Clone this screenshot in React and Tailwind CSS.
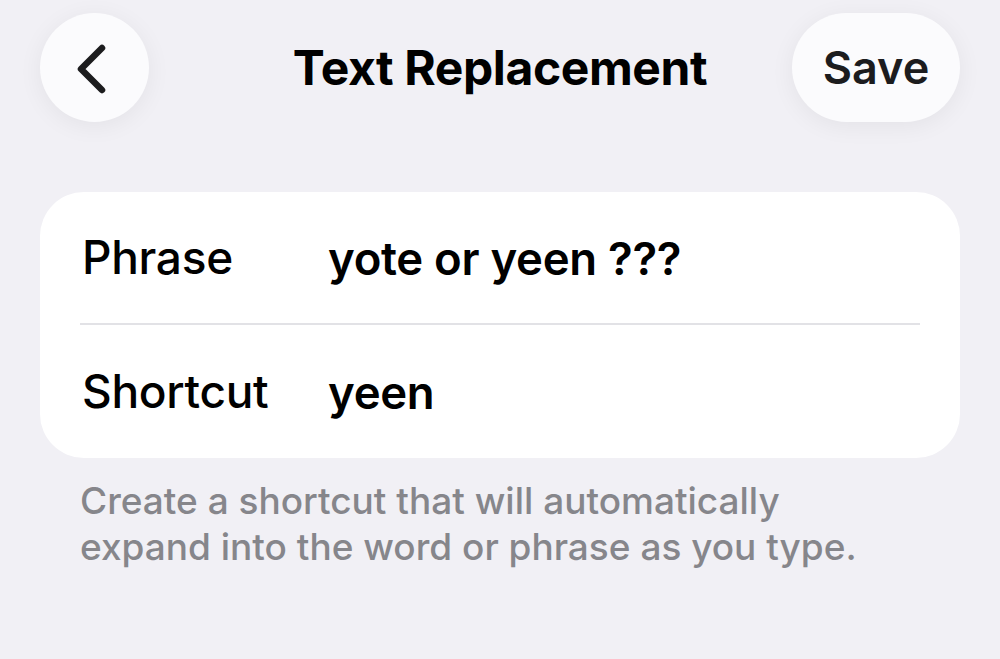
import React from 'react';

const font = { fontFamily: 'Inter, "Noto Sans", sans-serif' };

const Row = ({ label, value }) => (
  <div className="flex items-center h-full">
    <div className="w-[246px] text-[46px] font-medium text-black tracking-[-0.3px]">{label}</div>
    <div className="text-[45.5px] font-semibold text-black tracking-[-0.3px] pt-[3px]">{value}</div>
  </div>
);

export default function App() {
  return (
    <div className="w-[1000px] h-[659px] bg-[#f1f0f5] overflow-hidden" style={font}>
      {/* Nav bar */}
      <div className="flex items-center px-[40px] pt-[13px]">
        <div className="flex-1 flex">
          <button className="w-[109px] h-[109px] rounded-full bg-[#fbfbfd] shadow-[0_4px_24px_rgba(0,0,0,0.06)] flex items-center justify-center">
            <svg width="40" height="60" viewBox="0 0 40 60" fill="none">
              <path d="M27 10 L6 31 L27 52" stroke="#1c1c1e" strokeWidth="6.5" strokeLinecap="round" strokeLinejoin="round" />
            </svg>
          </button>
        </div>
        <div className="text-[48px] font-bold text-black tracking-[-0.4px]">Text Replacement</div>
        <div className="flex-1 flex justify-end">
          <button className="w-[168px] h-[109px] rounded-full bg-[#fbfbfd] shadow-[0_4px_24px_rgba(0,0,0,0.06)] flex items-center justify-center text-[45px] font-semibold text-[#1c1c1e]">
            Save
          </button>
        </div>
      </div>

      {/* Card */}
      <div className="mx-[40px] mt-[70px] bg-white rounded-[44px]">
        <div className="h-[131px] px-[42px]">
          <Row label="Phrase" value="yote or yeen ???" />
        </div>
        <div className="mx-[40px] h-[2px] bg-[#e2e2e6]" />
        <div className="h-[133px] px-[42px]">
          <Row label="Shortcut" value="yeen" />
        </div>
      </div>

      {/* Footer */}
      <p className="px-[80px] mt-[20px] text-[37px] leading-[46px] text-[#86868b] font-medium">
        Create a shortcut that will automatically
        <br />
        expand into the word or phrase as you type.
      </p>
    </div>
  );
}
